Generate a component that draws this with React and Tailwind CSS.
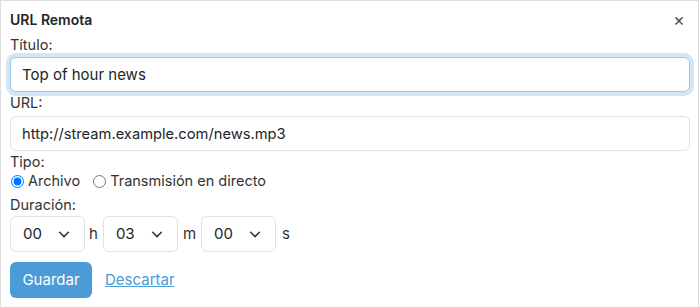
import { useState } from 'react';

function Chevron() {
  return (
    <svg className="w-3.5 h-3.5 text-[#343a40]" viewBox="0 0 16 16" fill="none">
      <path d="M3 6l5 5 5-5" stroke="currentColor" strokeWidth="1.8" strokeLinecap="round" strokeLinejoin="round" />
    </svg>
  );
}

function TimeSelect({ value }) {
  return (
    <div className="relative w-[75px] h-[36px]">
      <select
        defaultValue={value}
        className="appearance-none w-full h-full border border-[#dee2e6] rounded-[6px] bg-white pl-[12px] text-[15px] text-[#212529] outline-none"
      >
        <option>{value}</option>
      </select>
      <span className="absolute right-[14px] top-[11px] pointer-events-none">
        <Chevron />
      </span>
    </div>
  );
}

export default function App() {
  const [tipo, setTipo] = useState('archivo');

  return (
    <div
      className="w-[699px] h-[320px] border border-[#dcdcdc] bg-white px-[9px] pt-[9px] text-[#212529]"
      style={{ fontFamily: 'Inter, "Noto Sans", sans-serif' }}
    >
      {/* Header */}
      <div className="flex items-center justify-between h-[20px]">
        <div className="text-[14px] font-semibold leading-[20px]">URL Remota</div>
        <button className="mr-[4px] text-[#555] text-[18px] leading-none">×</button>
      </div>

      <label className="block mt-[6px] text-[14.5px] leading-[18px] text-[#333]">Título:</label>
      <input
        defaultValue="Top of hour news"
        className="mt-[3px] block w-[680px] h-[35px] px-[11px] rounded-[6px] border border-[#9fc6e8] ring-4 ring-[#d4e5f5] text-[15px] text-[#212529] outline-none"
      />

      <label className="block mt-[2px] text-[14.5px] leading-[18px] text-[#333]">URL:</label>
      <input
        defaultValue="http://stream.example.com/news.mp3"
        className="mt-[4px] block w-[680px] h-[35px] px-[11px] rounded-[6px] border border-[#dee2e6] text-[14.7px] text-[#212529] outline-none"
      />

      <div className="mt-[2px] text-[14.5px] leading-[18px] text-[#333]">Tipo:</div>
      <div className="flex items-center h-[20px] text-[14.5px] text-[#333]">
        <label className="flex items-center">
          <input
            type="radio"
            name="tipo"
            checked={tipo === 'archivo'}
            onChange={() => setTipo('archivo')}
            className="m-0 ml-[1px] w-[13px] h-[13px] accent-[#0075ff]"
          />
          <span className="ml-[4px]">Archivo</span>
        </label>
        <label className="flex items-center ml-[13px]">
          <input
            type="radio"
            name="tipo"
            checked={tipo === 'directo'}
            onChange={() => setTipo('directo')}
            className="m-0 w-[13px] h-[13px]"
          />
          <span className="ml-[4px]">Transmisión en directo</span>
        </label>
      </div>

      <div className="mt-[5px] text-[14.5px] leading-[18px] text-[#333]">Duración:</div>
      <div className="mt-[2px] flex items-center text-[15px] text-[#333]">
        <TimeSelect value="00" />
        <span className="ml-[4px] mr-[5px]">h</span>
        <TimeSelect value="03" />
        <span className="ml-[5px] mr-[5px]">m</span>
        <TimeSelect value="00" />
        <span className="ml-[6px]">s</span>
      </div>

      <div className="mt-[10px] flex items-center">
        <button className="w-[82px] h-[36px] rounded-[6px] bg-[#4a9bd6] text-white text-[15px]">Guardar</button>
        <a href="#" className="ml-[13px] text-[15px] text-[#4a9bd6] underline">Descartar</a>
      </div>
    </div>
  );
}
